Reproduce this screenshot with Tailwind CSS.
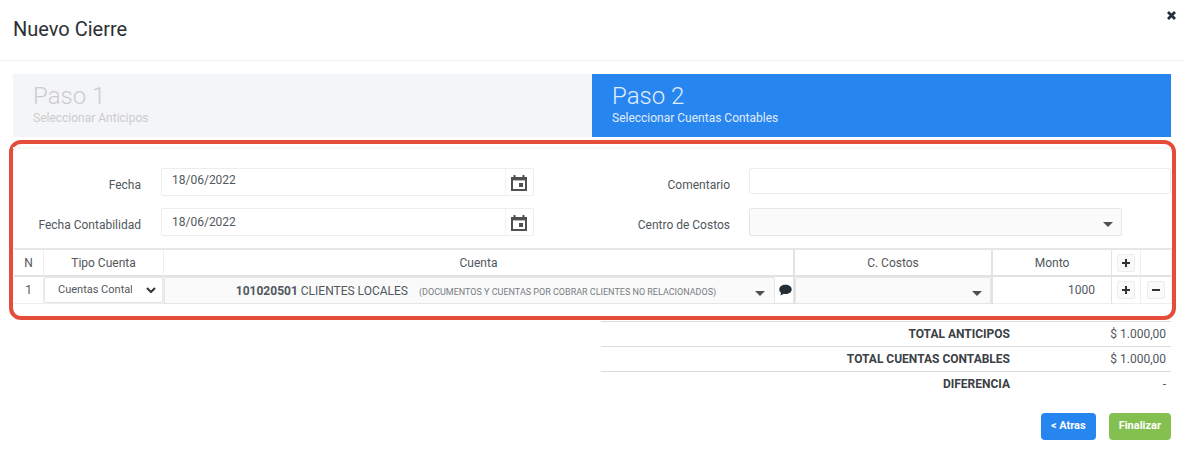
<!DOCTYPE html>
<html lang="es">
<head>
    <meta charset="UTF-8">
    <meta name="viewport" content="width=device-width, initial-scale=1.0">
    <title>Nuevo Cierre</title>
    <script src="https://cdn.jsdelivr.net/npm/@tailwindcss/browser@4"></script>
</head>
<body class="bg-white font-['Roboto',sans-serif] text-xs text-[#51575d]">
    <header class="flex items-start justify-between h-[61px] pl-[13px] pr-[7px] border-b border-[#f1f1f1]">
        <h1 class="pt-[17px] text-xl leading-6 text-[#2b2f33]">Nuevo Cierre</h1>
        <button type="button" aria-label="Cerrar" class="mt-[9px] p-0.5 text-[#252d38]">
            <svg viewBox="0 0 9 9" class="w-[9px] h-[9px]" fill="none" stroke="currentColor" stroke-width="2.8">
                <path d="M1 1l7 7M8 1l-7 7"></path>
            </svg>
        </button>
    </header>

    <main>
        <!-- Pasos -->
        <ol class="grid grid-cols-2 mt-[13px] ml-[13px] mr-3.5">
            <li class="h-[63px] px-5 pt-2 bg-[#f4f5f7] text-[#cbccce]">
                <div class="text-2xl leading-7 font-light">Paso 1</div>
                <div class="leading-4">Seleccionar Anticipos</div>
            </li>
            <li class="h-[63px] px-5 pt-2 bg-[#2785f0] text-[#e0edfc]" aria-current="step">
                <div class="text-2xl leading-7 font-light">Paso 2</div>
                <div class="leading-4">Seleccionar Cuentas Contables</div>
            </li>
        </ol>

        <!-- Datos del cierre -->
        <section class="mt-[3px] mx-[9px] pt-[3px] pb-3 border-4 border-[#e54d3b] rounded-xl">
            <div class="grid grid-cols-2 gap-y-3 mr-px pt-[19px] border-t-2 border-[#f7f7f7]">
                <div class="flex h-7 items-start">
                    <label for="fecha" class="w-32 shrink-0 pt-[9px] text-right leading-4">Fecha</label>
                    <div class="flex flex-1 h-7 ml-5 mr-[58px] border border-[#ededed] rounded-xs">
                        <input id="fecha" type="text" value="18/06/2022" class="flex-1 min-w-0 px-2.5 pb-1 text-[#55595d] outline-none">
                        <button type="button" aria-label="Abrir calendario" class="w-7 pt-0.5 pl-1 border-l border-[#f3f3f3] text-[#505050]">
                            <svg viewBox="0 0 18 18" class="w-[18px] h-[18px]" fill="none" stroke="currentColor">
                                <path d="M2 4.5h14v11.500H2z" stroke-width="2"></path>
                                <path d="M1 4.700h16" stroke-width="3.4"></path>
                                <path d="M4.500 1v3M13.500 1v3" stroke-width="2"></path>
                                <path d="M9 9h4v4H9z" fill="currentColor" stroke="none"></path>
                            </svg>
                        </button>
                    </div>
                </div>
                <div class="flex h-7 items-start">
                    <label for="comentario" class="w-[138px] shrink-0 pt-[9px] text-right leading-4">Comentario</label>
                    <input id="comentario" type="text" class="flex-1 min-w-0 h-[26px] ml-[19px] px-2.5 border border-[#ededed] rounded-xs outline-none">
                </div>
                <div class="flex h-7 items-start">
                    <label for="fecha-contabilidad" class="w-32 shrink-0 pt-[9px] text-right leading-4">Fecha Contabilidad</label>
                    <div class="flex flex-1 h-7 ml-5 mr-[58px] border border-[#ededed] rounded-xs">
                        <input id="fecha-contabilidad" type="text" value="18/06/2022" class="flex-1 min-w-0 px-2.5 text-[#55595d] outline-none">
                        <button type="button" aria-label="Abrir calendario" class="w-7 pt-0.5 pl-1 border-l border-[#f3f3f3] text-[#505050]">
                            <svg viewBox="0 0 18 18" class="w-[18px] h-[18px]" fill="none" stroke="currentColor">
                                <path d="M2 4.5h14v11.500H2z" stroke-width="2"></path>
                                <path d="M1 4.700h16" stroke-width="3.4"></path>
                                <path d="M4.500 1v3M13.500 1v3" stroke-width="2"></path>
                                <path d="M9 9h4v4H9z" fill="currentColor" stroke="none"></path>
                            </svg>
                        </button>
                    </div>
                </div>
                <div class="flex h-7 items-start">
                    <label for="centro-costos" class="w-[138px] shrink-0 pt-[9px] text-right leading-4">Centro de Costos</label>
                    <div class="grid flex-1 h-7 ml-[19px] mr-[49px]">
                        <select id="centro-costos" class="col-start-1 row-start-1 appearance-none px-2.5 bg-[#fafafa] border border-[#e6e6e6] rounded-xs outline-none">
                            <option value=""></option>
                        </select>
                        <svg viewBox="0 0 10 5" class="col-start-1 row-start-1 justify-self-end self-center mt-1 mr-[9px] w-2.5 h-[5px] pointer-events-none" fill="#505050">
                            <path d="M0 0h10L5 5z"></path>
                        </svg>
                    </div>
                </div>
            </div>

            <div class="ml-px">
                <table class="w-full mt-3 table-fixed border-separate border-spacing-0 border-t-2 border-[#e6e6e6] text-center">
                    <colgroup>
                        <col class="w-[30px]">
                        <col class="w-[120px]">
                        <col>
                        <col class="w-[198px]">
                        <col class="w-[119px]">
                        <col class="w-[29px]">
                        <col class="w-[31px]">
                    </colgroup>
                    <thead>
                        <tr class="h-[27px]">
                            <th scope="col" class="p-0 font-normal border-r border-b-2 border-r-[#efefef] border-b-[#e2e2e2]">N</th>
                            <th scope="col" class="p-0 font-normal border-r border-b-2 border-r-[#efefef] border-b-[#e2e2e2]">Tipo Cuenta</th>
                            <th scope="col" class="p-0 font-normal border-r-2 border-b-2 border-[#e2e2e2]">Cuenta</th>
                            <th scope="col" class="p-0 font-normal border-r-2 border-b-2 border-[#e2e2e2]">C. Costos</th>
                            <th scope="col" class="p-0 font-normal border-r border-b-2 border-[#e2e2e2]">Monto</th>
                            <th scope="col" class="p-0 border-r border-b-2 border-r-[#efefef] border-b-[#e2e2e2]">
                                <button type="button" aria-label="Agregar cuenta" class="flex items-center justify-center w-[18px] h-[18px] mx-auto bg-[#fafafa] border border-[#ededed] rounded-xs text-[#333]">
                                    <svg viewBox="0 0 8 8" class="w-2 h-2" fill="none" stroke="currentColor" stroke-width="2"><path d="M4 0v8M0 4h8"></path></svg>
                                </button>
                            </th>
                            <td class="p-0 border-r border-b-2 border-r-[#efefef] border-b-[#e2e2e2]"></td>
                        </tr>
                    </thead>
                    <tbody>
                        <tr class="h-[27px]">
                            <td class="p-0 border-r border-b border-[#ededed]">1</td>
                            <td class="p-0 border-r border-b border-[#ededed]">
                                <div class="grid h-[26px]">
                                    <select aria-label="Tipo Cuenta" class="col-start-1 row-start-1 w-full min-w-0 appearance-none pl-[13px] pr-[30px] border border-[#e6e6e6] rounded-xs text-[11px] outline-none overflow-hidden">
                                        <option>Cuentas Contables</option>
                                    </select>
                                    <svg viewBox="0 0 10 6" class="col-start-1 row-start-1 justify-self-end self-center mr-[7px] w-2.5 h-1.5 pointer-events-none" fill="none" stroke="#333" stroke-width="2">
                                        <path d="M1 1l4 4 4-4"></path>
                                    </svg>
                                </div>
                            </td>
                            <td class="p-0 border-r-2 border-b border-[#e2e2e2]">
                                <div class="flex h-[26px]">
                                    <button type="button" aria-haspopup="listbox" class="flex flex-1 items-center h-[27px] pl-8 pr-[9px] bg-[#fafafa] border border-[#e6e6e6] rounded-xs">
                                        <span class="flex-1 text-center">
                                            <b class="font-bold">101020501</b> CLIENTES LOCALES
                                            <small class="ml-2 text-[9px] text-[#767c82]">(DOCUMENTOS Y CUENTAS POR COBRAR CLIENTES NO RELACIONADOS)</small>
                                        </span>
                                        <svg viewBox="0 0 10 5" class="mt-1.5 w-2.5 h-[5px]" fill="#505050"><path d="M0 0h10L5 5z"></path></svg>
                                    </button>
                                    <button type="button" aria-label="Comentario de la cuenta" class="w-[18px] pl-1 text-[#252d35]">
                                        <svg viewBox="0 0 13 12" class="w-[13px] h-3" fill="currentColor">
                                            <path d="M6.500.8c3.600 0 6.200 1.900 6.200 4.600S10.100 10 6.500 10c-.6 0-1.100-.1-1.600-.2-1 .9-2.500 1.400-4 1.400.8-.7 1.200-1.400 1.200-2.300C1 8 .3 6.800.3 5.400.3 2.700 2.900.8 6.500.8z"></path>
                                        </svg>
                                    </button>
                                </div>
                            </td>
                            <td class="p-0 border-r-2 border-b border-[#e2e2e2]">
                                <div class="grid h-[26px]">
                                    <select aria-label="C. Costos" class="col-start-1 row-start-1 h-[27px] appearance-none px-2.5 bg-[#fafafa] border border-[#e6e6e6] rounded-xs outline-none">
                                        <option value=""></option>
                                    </select>
                                    <svg viewBox="0 0 10 5" class="col-start-1 row-start-1 justify-self-end self-center mt-1.5 mr-[9px] w-2.5 h-[5px] pointer-events-none" fill="#505050"><path d="M0 0h10L5 5z"></path></svg>
                                </div>
                            </td>
                            <td class="p-0 border-r border-b border-r-[#e2e2e2] border-b-[#efefef]">
                                <input type="text" aria-label="Monto" value="1000" class="block w-full h-[26px] px-4 text-right outline-none">
                            </td>
                            <td class="p-0 border-r border-b border-[#efefef]">
                                <button type="button" aria-label="Agregar fila" class="flex items-center justify-center w-[18px] h-[18px] mx-auto bg-[#fafafa] border border-[#ededed] rounded-xs text-[#333]">
                                    <svg viewBox="0 0 8 8" class="w-2 h-2" fill="none" stroke="currentColor" stroke-width="2"><path d="M4 0v8M0 4h8"></path></svg>
                                </button>
                            </td>
                            <td class="p-0 border-r border-b border-[#efefef]">
                                <button type="button" aria-label="Quitar fila" class="flex items-center justify-center w-[18px] h-[18px] mx-auto bg-[#fafafa] border border-[#ededed] rounded-xs text-[#333]">
                                    <svg viewBox="0 0 8 8" class="w-2 h-2" fill="none" stroke="currentColor" stroke-width="2"><path d="M0 4h8"></path></svg>
                                </button>
                            </td>
                        </tr>
                    </tbody>
                </table>
            </div>
        </section>

        <!-- Totales -->
        <div class="grid grid-cols-2 mt-px ml-[13px] mr-3.5">
            <table class="col-start-2 ml-[9px] text-right">
                <tbody>
                    <tr class="h-[25px] border-t border-[#dcdcdc]">
                        <th scope="row" class="p-0 font-bold text-[#3b4045]">TOTAL ANTICIPOS</th>
                        <td class="w-[161px] p-0 pr-[5px]">$ 1.000,00</td>
                    </tr>
                    <tr class="h-[25px] border-t border-[#dcdcdc]">
                        <th scope="row" class="p-0 font-bold text-[#3b4045]">TOTAL CUENTAS CONTABLES</th>
                        <td class="w-[161px] p-0 pr-[5px]">$ 1.000,00</td>
                    </tr>
                    <tr class="h-[25px] border-t border-[#dcdcdc]">
                        <th scope="row" class="p-0 font-bold text-[#3b4045]">DIFERENCIA</th>
                        <td class="w-[161px] p-0 pr-[5px]">-</td>
                    </tr>
                </tbody>
            </table>
        </div>

        <div class="flex justify-end gap-[13px] mt-4 ml-[13px] mr-3.5 text-[11px] font-bold text-white">
            <button type="button" class="h-[27px] px-2.5 bg-[#2785f0] rounded-sm">&lt; Atras</button>
            <button type="button" class="h-[27px] px-2.5 bg-[#84c04f] rounded-sm">Finalizar</button>
        </div>
    </main>
</body>
</html>
